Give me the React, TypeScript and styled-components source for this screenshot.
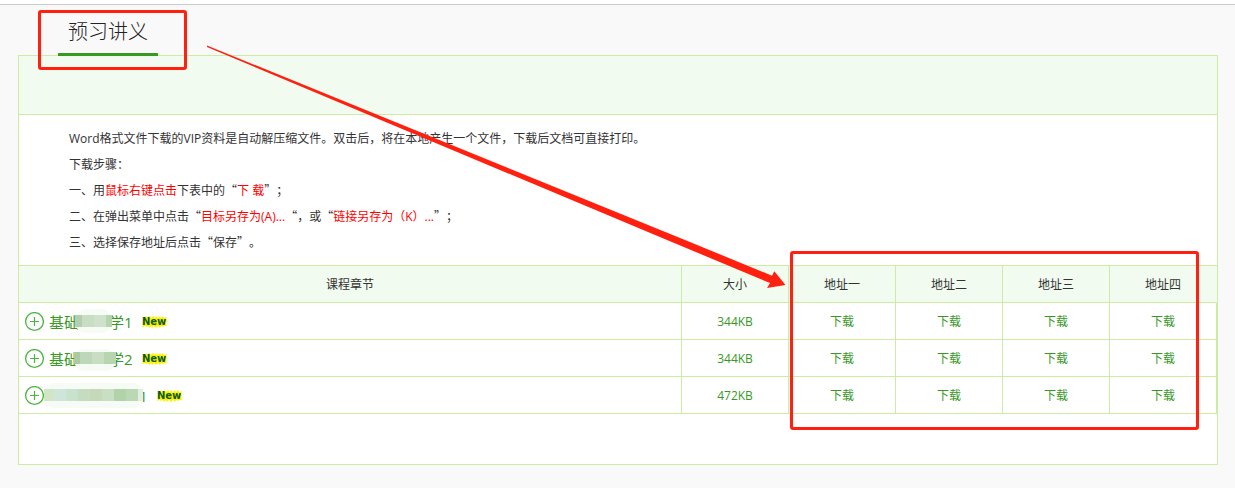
import React from "react";
import styled, { createGlobalStyle } from "styled-components";

const green = "#37991f";
const line = "#cdeba3";
const tint = "#f1fbef";
const red = "#ff2010";
const cjk = '"Noto Sans CJK SC", sans-serif';

const GlobalStyle = createGlobalStyle`
  * { box-sizing: border-box; }
  body {
    margin: 0;
    background: #f9f9f9;
    color: #333;
    font: 12px/26px "Open Sans", ${cjk};
    text-spacing-trim: space-all;
  }
`;

const Page = styled.div`
  position: relative;
`;

const TopBar = styled.header`
  height: 5px;
  background: #fff;
  border-bottom: 1px solid #ccc;
`;

const Main = styled.main`
  padding: 0 17px 23px 18px;
`;

const Tabs = styled.nav`
  display: flex;
  padding-left: 40px;
`;

const Tab = styled.a`
  position: relative;
  z-index: 1;
  height: 51px;
  margin-bottom: -1px;
  padding: 5px 10px 0;
  border-bottom: 3px solid ${green};
  color: #222;
  font-size: 20px;
  font-weight: 300;
  line-height: 43px;
  text-decoration: none;
`;

const Highlight = styled.span<{ $inset: string; $width?: string }>`
  position: absolute;
  inset: ${(p) => p.$inset};
  width: ${(p) => p.$width ?? "auto"};
  border: 3px solid ${red};
  border-radius: 3px;
  pointer-events: none;
`;

const Panel = styled.section`
  padding-bottom: 50px;
  background: #fff;
  border: 1px solid ${line};
`;

const Band = styled.div`
  height: 59px;
  background: ${tint};
  border-bottom: 1px solid ${line};
`;

const Notes = styled.div`
  padding: 11px 50px 9px;
  border-bottom: 1px solid ${line};
`;

const Note = styled.p`
  margin: 0;
`;

const Red = styled.span`
  color: #f00;
`;

const Quote = styled.span`
  font-family: ${cjk};
  line-height: 1;
`;

const TableWrap = styled.div`
  position: relative;
`;

const Table = styled.table`
  width: 100%;
  table-layout: fixed;
  border-collapse: separate;
  border-spacing: 0;
`;

const Th = styled.th<{ $narrow?: boolean }>`
  width: ${(p) => (p.$narrow ? "107px" : "auto")};
  height: 37px;
  padding: 2px 0 0;
  background: ${tint};
  border: solid ${line};
  border-width: 0 1px 1px 0;
  font-weight: 400;
  &:last-child { border-right-color: ${tint}; }
`;

const Td = styled.td`
  height: 37px;
  padding: 2px 0 0;
  border: solid ${line};
  border-width: 0 1px 1px 0;
  color: ${green};
  text-align: center;
`;

const Download = styled.a`
  color: ${green};
  text-decoration: none;
`;

const Chapter = styled.div`
  display: flex;
  align-items: center;
  padding-left: 5px;
  font-size: 15px;
`;

const Toggle = styled.button`
  display: flex;
  margin: 0 5px 0 0;
  padding: 0;
  border: 0;
  background: none;
`;

const Hidden = styled.span<{ $width: number }>`
  position: relative;
  width: ${(p) => p.$width}px;
  height: 26px;
`;

const Mosaic = styled.svg<{ $left: number }>`
  position: absolute;
  top: 0;
  left: ${(p) => p.$left}px;
`;

const Badge = styled.span`
  position: relative;
  display: flex;
  margin-left: 9px;
`;

const BadgeText = styled.span`
  position: absolute;
  inset: 0;
  color: #0b5a2a;
  font: bold 10px/12px "DejaVu Sans", sans-serif;
  text-align: center;
`;

const Arrow = styled.svg`
  position: absolute;
  top: 0;
  left: 0;
  z-index: 2;
  pointer-events: none;
`;

type Tile = [width: number, color: string];

type Row = {
  before: string;
  after: string;
  size: string;
  hidden: number;
  left: number;
  halo: [top: number, bottom: number];
  tiles: Tile[];
};

const rows: Row[] = [
  {
    before: "基础", after: "学1", size: "344KB", hidden: 30, left: -4, halo: [0, 24],
    tiles: [[7, "#b3cfad"], [12, "#c8dec2"], [12, "#cfe1ca"], [6, "#b5d5ad"]],
  },
  {
    before: "基础", after: "学2", size: "344KB", hidden: 30, left: -5, halo: [3, 25],
    tiles: [[6, "#aacba4"], [12, "#bdd8b8"], [12, "#c8dec2"], [12, "#b7d6af"]],
  },
  {
    before: "", after: "1", size: "472KB", hidden: 90, left: -5, halo: [0, 25],
    tiles: [
      [10, "#d3e5c7"], [12, "#cfe4da"], [12, "#c9e2cb"], [12, "#c6dcc0"], [12, "#c5d9b9"],
      [12, "#c9dfc3"], [12, "#b2d2a9"], [12, "#bad8b4"], [5, "#e2eee4"],
    ],
  },
];

const addresses = ["地址一", "地址二", "地址三", "地址四"];

function Redaction({ row }: { row: Row }) {
  const width = row.tiles.reduce((sum, [w]) => sum + w, 0);
  const [top, bottom] = row.halo;
  let x = 0;
  return (
    <Hidden $width={row.hidden}>
      <Mosaic $left={row.left} width={width} height="26" aria-hidden="true">
        <rect y={top} width={width} height={bottom - top} rx="11" fill="#f7fbf5" />
        {row.tiles.map(([w, color], i) => {
          const at = x;
          x += w;
          return <rect key={i} x={at} y="6" width={w} height="12" fill={color} />;
        })}
      </Mosaic>
    </Hidden>
  );
}

function NewBadge() {
  return (
    <Badge>
      <svg width="25" height="12" viewBox="0 0 25 12" aria-hidden="true">
        <path
          fill="#fff200"
          d="M0 1L3 2 4 0 6 2 8 0 9 2 11 0 13 2 14 0 16 2 18 0 19 2 21 0 22 2 25 1 24 4 25 5 24 7 25 10 22 10 21 11 19 10 18 12 16 10 14 12 12 10 10 12 9 10 7 12 6 10 4 11 3 10 0 11 1 8 0 7 1 5 0 4 1 3Z"
        />
      </svg>
      <BadgeText>New</BadgeText>
    </Badge>
  );
}

export default function App() {
  return (
    <Page lang="zh-CN">
      <GlobalStyle />
      <TopBar />
      <Main>
        <Tabs>
          <Tab href="#handouts">
            预习讲义
            <Highlight $inset="5px -29px -17px -20px" />
          </Tab>
        </Tabs>
        <Panel id="handouts">
          <Band />
          <Notes>
            <Note>Word格式文件下载的VIP资料是自动解压缩文件。双击后，将在本地产生一个文件，下载后文档可直接打印。</Note>
            <Note>下载步骤：</Note>
            <Note>
              一、用<Red>鼠标右键点击</Red>下表中的<Quote>“</Quote><Red>下 载</Red><Quote>”</Quote>；
            </Note>
            <Note>
              二、在弹出菜单中点击<Quote>“</Quote><Red>目标另存为(A)...</Red><Quote>“</Quote>，或<Quote>“</Quote>
              <Red>链接另存为（K）...</Red><Quote>”</Quote>；
            </Note>
            <Note>
              三、选择保存地址后点击<Quote>“</Quote>保存<Quote>”</Quote>。
            </Note>
          </Notes>
          <TableWrap>
            <Table>
              <thead>
                <tr>
                  <Th scope="col">课程章节</Th>
                  <Th scope="col" $narrow>大小</Th>
                  {addresses.map((name) => (
                    <Th key={name} scope="col" $narrow>{name}</Th>
                  ))}
                </tr>
              </thead>
              <tbody>
                {rows.map((row, i) => (
                  <tr key={i}>
                    <Td>
                      <Chapter>
                        <Toggle type="button" aria-label="展开">
                          <svg width="20" height="20" viewBox="0 0 20 20" fill="none" stroke="#4ab540">
                            <circle cx="10.5" cy="9.5" r="8.9" strokeWidth="1.3" />
                            <path d="M6 9.5h9M10.5 5v9" strokeWidth="1.2" />
                          </svg>
                        </Toggle>
                        {row.before}
                        <Redaction row={row} />
                        {row.after}
                        <NewBadge />
                      </Chapter>
                    </Td>
                    <Td>{row.size}</Td>
                    {addresses.map((name) => (
                      <Td key={name}>
                        <Download href="#download" aria-label={`下载 ${name}`}>下载</Download>
                      </Td>
                    ))}
                  </tr>
                ))}
              </tbody>
            </Table>
            <Highlight $inset="-15px 18px -16px auto" $width="409px" />
          </TableWrap>
        </Panel>
      </Main>
      <Arrow width="800" height="300" aria-hidden="true">
        <path fill={red} d="M207 45.5L685 240 772 275.7 774.3 271.3 785.5 285 767 288 770 283 667 240 207 47z" />
      </Arrow>
    </Page>
  );
}
